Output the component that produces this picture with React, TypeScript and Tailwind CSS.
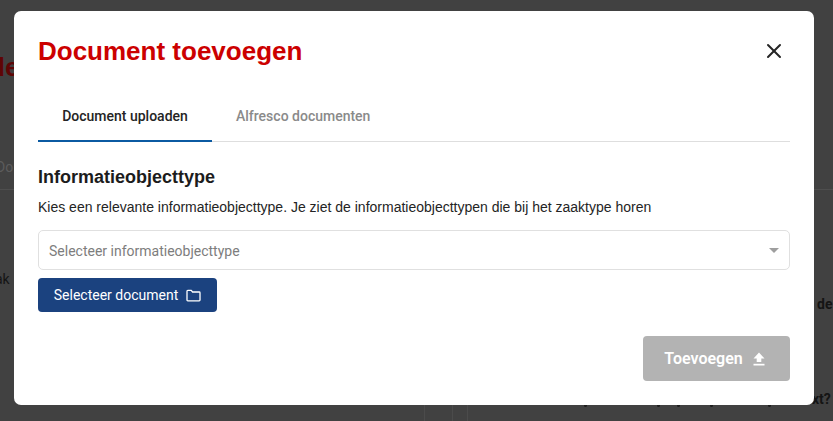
import { X } from "lucide-react";

// bits of the hidden question line that poke out under the dialog
const DESCENDERS = [584, 657, 677, 710, 768];

function FolderIcon() {
  return (
    <svg width="15" height="13" viewBox="0 0 15 13" fill="none" stroke="currentColor" strokeWidth="1.3">
      <path d="M1 11V2.2C1 1.7 1.3 1.4 1.8 1.4H5.2L6.6 3H13.2C13.7 3 14 3.3 14 3.8V11C14 11.5 13.7 11.8 13.2 11.8H1.8C1.3 11.8 1 11.5 1 11Z" />
    </svg>
  );
}

function UploadIcon() {
  return (
    <svg width="12" height="14" viewBox="0 0 12 14" fill="currentColor">
      <path d="M6 0.5L11.5 6.5H8.3V10H3.7V6.5H0.5Z" />
      <rect x="0.5" y="11.8" width="11" height="1.7" />
    </svg>
  );
}

// page behind the dialog, only the bits that stick out
function BackgroundPage() {
  return (
    <div className="absolute inset-0 text-[#141414]">
      <span className="absolute left-[-11px] top-[48px] font-['Liberation_Sans',sans-serif] text-[26px] font-bold text-[#5e0505]">de</span>
      <span className="absolute left-[-4px] top-[157px] text-[14px] text-[#5c5c5c]">Do</span>
      <div className="absolute left-0 top-[189px] h-px w-[14px] bg-[#4e4e4e]" />
      <div className="absolute right-0 top-[189px] h-px w-[19px] bg-[#4e4e4e]" />
      <span className="absolute left-[-5px] top-[269px] text-[14px]">ak</span>
      <span className="absolute left-[817px] top-[294px] text-[14px] font-bold">de</span>
      <span className="absolute left-[812px] top-[389px] text-[14px] font-bold">xt?</span>
      <div className="absolute left-[424px] top-[405px] h-4 w-[29px] border-x border-[#4b4b4b]" />
      <div className="absolute left-[467px] top-[405px] h-4 w-px bg-[#4b4b4b]" />
      {DESCENDERS.map((x) => (
        <div key={x} className="absolute top-[405px] h-[2px] w-[3px] rounded-b-sm bg-[#1c1c1c]" style={{ left: x }} />
      ))}
    </div>
  );
}

export default function App() {
  return (
    <div className="relative h-[421px] w-[833px] overflow-hidden bg-[#414141] font-['Roboto',sans-serif]">
      <BackgroundPage />
      <div className="absolute left-[14px] top-[11px] flex h-[394px] w-[800px] flex-col rounded-[7px] bg-white px-6">
        <div className="flex h-[81px] items-center justify-between">
          <h1 className="font-['Liberation_Sans',sans-serif] text-[26px] font-bold text-[#cc0000]">Document toevoegen</h1>
          <X size={24} strokeWidth={2} className="mt-[-1px] mr-1 text-[#262626]" />
        </div>
        <div className="flex h-[50px] items-end border-b border-[#dedede] text-[14px] font-medium">
          <div className="mb-[-1px] flex h-[49px] w-[174px] items-center justify-center border-b-2 border-[#0b5aa2] text-[#242424]">
            Document uploaden
          </div>
          <div className="flex h-[48px] items-center px-6 pb-[1px] text-[#8a8a8a]">Alfresco documenten</div>
        </div>
        <h2 className="mt-[24px] font-['Liberation_Sans',sans-serif] text-[18px] leading-[22px] font-bold text-[#1c1c1c]">
          Informatieobjecttype
        </h2>
        <p className="mt-[11px] font-['Liberation_Sans',sans-serif] text-[14px] leading-[16px] text-[#242424]">
          Kies een relevante informatieobjecttype. Je ziet de informatieobjecttypen die bij het zaaktype horen
        </p>
        <div className="mt-[15px] flex h-10 items-center justify-between rounded-[5px] border border-[#e0e0e0] pr-[10px] pl-[10px] text-[14px] text-[#7d7d7d]">
          <span className="pt-[2px]">Selecteer informatieobjecttype</span>
          <div className="h-0 w-0 border-x-[5px] border-t-[5px] border-x-transparent border-t-[#9e9e9e]" />
        </div>
        <button className="mt-2 flex h-[34px] w-[179px] items-center justify-center gap-2 rounded-[4px] bg-[#1b427f] text-[14px] text-white">
          Selecteer document
          <FolderIcon />
        </button>
        <div className="mt-6 flex justify-end">
          <button className="flex h-[45px] w-[147px] items-center justify-center gap-[10px] rounded-[4px] bg-[#b3b3b3] pr-1 text-[16px] font-semibold text-white">
            Toevoegen
            <UploadIcon />
          </button>
        </div>
      </div>
    </div>
  );
}
